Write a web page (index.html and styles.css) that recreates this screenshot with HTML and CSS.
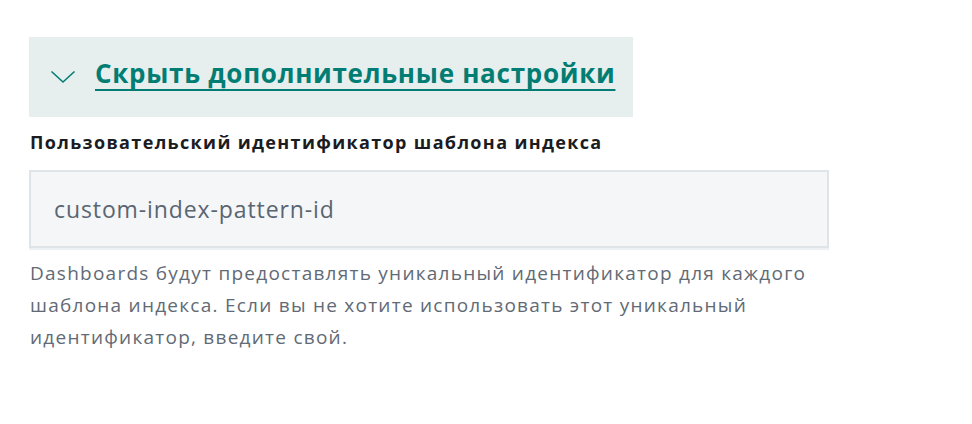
FILE: index.html
```html
<!DOCTYPE html>
<html lang="ru">
<head>
<meta charset="utf-8">
<link rel="stylesheet" href="styles.css">
</head>
<body>
<div class="page">
  <div class="toggle">
    <svg class="chev" width="26" height="14" viewBox="0 0 26 14"><path d="M1.5 1.5 L13 12 L24.5 1.5" fill="none" stroke="#017d73" stroke-width="1.6"/></svg>
    <a class="toggle-link" href="#">Скрыть дополнительные настройки</a>
  </div>
  <div class="field">
    <label class="label">Пользовательский идентификатор шаблона индекса</label>
    <div class="input">custom-index-pattern-id</div>
    <div class="help">Dashboards будут предоставлять уникальный идентификатор для каждого шаблона индекса. Если вы не хотите использовать этот уникальный идентификатор, введите свой.</div>
  </div>
</div>
</body>
</html>
```

FILE: styles.css
```css
html, body { margin: 0; padding: 0; background: #ffffff; }
body { font-family: "Open Sans", "Noto Sans", sans-serif; }
.page { padding: 37px 0 0 29px; width: 800px; }
.toggle {
  width: 604px; height: 80px; box-sizing: border-box;
  background: #e6eeee;
  display: flex; align-items: center;
  padding-left: 21px; padding-bottom: 8px; gap: 19px;
}
.chev { display: block; margin-top: 8px; }
.toggle-link {
  color: #017d73; font-weight: 700; font-size: 26px; letter-spacing: 0.72px;
  text-decoration: underline; text-decoration-thickness: 2px; text-underline-offset: 6px;
  white-space: nowrap;
}
.field { margin-top: 13px; }
.label { display: block; font-weight: 700; font-size: 18px; letter-spacing: 1.35px; color: #1a1c21; margin-left: 1px; line-height: 24px; white-space: nowrap; }
.input {
  margin-top: 16px; width: 800px; height: 78px; box-sizing: border-box;
  background: #f4f6f8; border: 2px solid #dfe4e9;
  box-shadow: 0 2px 0 #eef1f4;
  display: flex; align-items: center; padding-left: 23px;
  font-size: 23px; letter-spacing: 0.9px; color: #5a6572;
}
.help { margin-top: 9px; margin-left: 1px; width: 800px; font-size: 19px; letter-spacing: 1.25px; line-height: 32px; color: #626a75; }
```
